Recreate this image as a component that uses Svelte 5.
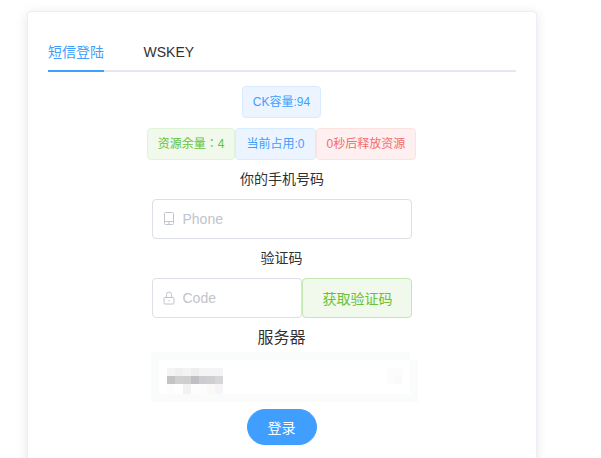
<script>
	const tags = [
		{ text: '资源余量：4', kind: 'success' },
		{ text: '当前占用:0', kind: 'primary' },
		{ text: '0秒后释放资源', kind: 'danger' }
	];

	// the server select is pixelated in the screenshot, one colour per cell
	const W = '#ffffff';
	const B = '#fafbfb';
	const A = '#fcfcfc';
	const mosaic = [
		[...Array(32).fill(B), W],
		[B, ...Array(31).fill(W), B],
		[B, W, '#f4f4f4', '#f0f0f0', '#f3f3f3', '#eeeeee', '#f3f3f3', '#f4f4f4', '#f4f4f4', ...Array(20).fill(W), A, A, W, B],
		[B, W, '#c4c4c7', '#d0d0d2', '#cfcfcf', '#bfc0c3', '#cdcdd0', '#cecfd1', '#d6d6d9', ...Array(20).fill(W), A, '#fafafa', W, B],
		[B, W, '#fdfdfd', W, '#f2f2f3', '#fdfdfd', '#fdfdfd', '#fbf9f8', '#f5f5f7', ...Array(23).fill(W), B],
		[...Array(33).fill(B)]
	];
</script>

<div class="card">
	<div class="tabs">
		<div class="tab active">短信登陆</div>
		<div class="tab">WSKEY</div>
	</div>

	<div class="content">
		<div class="tag primary">CK容量:94</div>
		<div class="tag-row">
			{#each tags as tag}
				<div class="tag {tag.kind}">{tag.text}</div>
			{/each}
		</div>

		<div class="label first">你的手机号码</div>
		<div class="input phone">
			<svg viewBox="0 0 14 14" width="14" height="14" fill="none" stroke="#c0c4cc" stroke-width="1">
				<rect x="2.5" y="0.5" width="9" height="12" rx="1" />
				<path d="M2.5 9.5h9M6 11h2" />
			</svg>
			<span>Phone</span>
		</div>

		<div class="label">验证码</div>
		<div class="code-row">
			<div class="input code">
				<svg viewBox="0 0 14 14" width="14" height="14" fill="none" stroke="#c0c4cc" stroke-width="1">
					<rect x="2" y="6.5" width="10" height="6.5" rx="1" />
					<path d="M4.5 6.5V3.5a2.5 2.5 0 0 1 5 0v3M7 9v1.5" />
				</svg>
				<span>Code</span>
			</div>
			<button class="send">获取验证码</button>
		</div>

		<div class="label server">服务器</div>
		<div class="mosaic">
			{#each mosaic as row, r}
				<div class="mosaic-row" class:tall={r === 4}>
					{#each row as color}
						<i style="background:{color}"></i>
					{/each}
				</div>
			{/each}
		</div>

		<button class="login">登录</button>
	</div>
</div>

<style>
	:global(body) {
		background: #fff;
		font-family: "Liberation Sans", "Noto Sans CJK JP", "Noto Sans CJK SC", sans-serif;
		color: #303133;
		overflow: hidden;
	}

	.card {
		box-sizing: border-box;
		width: 510px;
		height: 470px;
		margin: 11px 0 0 27px;
		padding: 20px;
		background: #fff;
		border: 1px solid #ebeef5;
		border-radius: 4px;
		box-shadow: 0 2px 12px 0 rgba(0, 0, 0, 0.1);
	}

	.tabs {
		display: flex;
		height: 38px;
		border-bottom: 2px solid #e4e7ed;
		margin-bottom: 14px;
	}

	.tab {
		box-sizing: border-box;
		height: 40px;
		line-height: 40px;
		padding: 0 20px;
		font-size: 14px;
		color: #303133;
	}

	.tab.active {
		padding: 0;
		margin-right: 19.5px;
		color: #409eff;
		border-bottom: 2px solid #409eff;
	}

	.content {
		display: flex;
		flex-direction: column;
		align-items: center;
		padding-right: 1px;
	}

	.tag {
		box-sizing: border-box;
		height: 32px;
		line-height: 30px;
		padding: 0 10px;
		font-size: 12px;
		border: 1px solid;
		border-radius: 4px;
		white-space: nowrap;
	}

	.primary { background: #ecf5ff; border-color: #d9ecff; color: #409eff; }
	.success { background: #f0f9eb; border-color: #e1f3d8; color: #67c23a; }
	.danger { background: #fef0f0; border-color: #fde2e2; color: #f56c6c; }

	.tag-row {
		display: flex;
		margin-top: 10px;
	}

	.label {
		height: 39px;
		line-height: 39px;
		font-size: 14px;
	}

	.label.first {
		padding-left: 1px;
	}

	.server {
		height: 34px;
		line-height: 40px;
		font-size: 16px;
	}

	.input {
		box-sizing: border-box;
		display: flex;
		align-items: center;
		gap: 7px;
		height: 40px;
		padding-left: 9px;
		background: #fff;
		border: 1px solid #dcdfe6;
		border-radius: 4px;
		font-size: 14px;
		color: #c0c4cc;
	}

	.phone { width: 260px; }

	.code-row {
		display: flex;
		width: 260px;
	}

	.code { width: 150px; }

	.send {
		box-sizing: border-box;
		width: 110px;
		height: 40px;
		padding: 0 0 0 2px;
		background: #f0f9eb;
		border: 1px solid #c2e7b0;
		border-radius: 4px;
		font: inherit;
		font-size: 14px;
		color: #67c23a;
	}

	.mosaic {
		width: 267px;
		margin-left: 5px;
	}

	.mosaic-row {
		display: flex;
		height: 8px;
	}

	.mosaic-row.tall { height: 10px; }

	.mosaic-row i {
		display: block;
		flex: none;
		width: 8px;
		height: 100%;
	}

	/* the arrow block sits 3px off the 8px grid */
	.mosaic-row i:nth-child(29) {
		width: 11px;
	}

	.login {
		box-sizing: border-box;
		width: 70px;
		height: 36px;
		margin-top: 7px;
		padding: 0;
		background: #409eff;
		border: 1px solid #409eff;
		border-radius: 20px;
		font: inherit;
		font-size: 14px;
		color: #fff;
	}
</style>
